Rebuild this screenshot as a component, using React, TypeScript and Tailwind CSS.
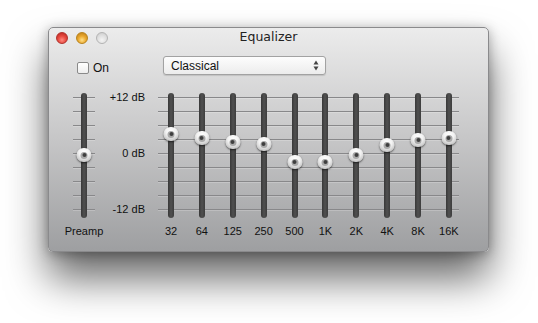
import React from "react";

const bands: { label: string; y: number }[] = [
  { label: "32", y: 41 },
  { label: "64", y: 45 },
  { label: "125", y: 49 },
  { label: "250", y: 51 },
  { label: "500", y: 69 },
  { label: "1K", y: 69 },
  { label: "2K", y: 62 },
  { label: "4K", y: 52 },
  { label: "8K", y: 47 },
  { label: "16K", y: 45 },
];

function Knob({ y }: { y: number }) {
  return (
    <div
      className="absolute left-1/2 -translate-x-1/2 w-[15px] h-[14px] rounded-full bg-[radial-gradient(circle_at_50%_30%,#ffffff_0%,#f2f2f2_40%,#c9c9c9_75%,#9a9a9a_100%)] shadow-[0_1px_2px_rgba(0,0,0,0.6)] flex items-center justify-center"
      style={{ top: y - 7 }}
    >
      <div className="w-[7px] h-[7px] rounded-full bg-[#a9a9a9] flex items-center justify-center">
        <div className="w-[4px] h-[4px] rounded-full bg-[#3f3f3f]" />
      </div>
    </div>
  );
}

function Track({ y }: { y: number }) {
  return (
    <div className="relative w-[16px] h-[125px] flex justify-center">
      <div className="w-[6px] h-[125px] rounded-full bg-gradient-to-r from-[#383838] via-[#505050] to-[#3d3d3d]" />
      <Knob y={y} />
    </div>
  );
}

const lines =
  "bg-[linear-gradient(to_bottom,#88888a_0px,#88888a_1px,rgba(255,255,255,0.2)_1px,rgba(255,255,255,0.2)_2px,transparent_2px)] bg-[length:100%_14px] bg-[position:0_4px]";

export default function App() {
  return (
    <div
      className="min-h-screen bg-white pt-[27px] pl-[48px]"
      style={{ fontFamily: '"Liberation Sans", Arial, sans-serif' }}
    >
      <div className="w-[441px] h-[225px] rounded-[5px] border border-[#8a8a8c] bg-gradient-to-b from-[#ececec] via-[#c6c6c7] to-[#9e9fa1] shadow-[0_26px_42px_rgba(0,0,0,0.6),0_2px_12px_rgba(0,0,0,0.3)] flex flex-col">
        {/* Title bar */}
        <div className="h-[19px] grid grid-cols-[1fr_auto_1fr] items-center px-[7px]">
          <div className="flex items-center gap-[8px]">
            <div className="w-[12px] h-[12px] rounded-full border border-[#b0302b] bg-[radial-gradient(circle_at_50%_70%,#ff8a80_0%,#e84a40_45%,#b3211b_100%)]" />
            <div className="w-[12px] h-[12px] rounded-full border border-[#b8831c] bg-[radial-gradient(circle_at_50%_70%,#ffe08a_0%,#eba92f_45%,#b97a14_100%)]" />
            <div className="w-[12px] h-[12px] rounded-full border border-[#b4b4b4] bg-[radial-gradient(circle_at_50%_70%,#f4f4f4_0%,#e0e0e0_50%,#c8c8c8_100%)]" />
          </div>
          <div
            className="text-[12.5px] text-[#222] leading-none"
            style={{ fontFamily: '"DejaVu Sans", "Liberation Sans", sans-serif' }}
          >
            Equalizer
          </div>
          <div />
        </div>

        {/* Controls row */}
        <div className="mt-[9px] h-[19px] flex items-start pl-[28px]">
          <div className="w-[86px] mt-[6px] flex items-center gap-[4px]">
            <div className="w-[12px] h-[12px] rounded-[2px] border border-[#8a8a8a] bg-gradient-to-b from-[#ffffff] to-[#eeeeee]" />
            <span className="text-[12px] leading-[12px] text-[#111]">On</span>
          </div>
          <div className="w-[163px] h-[19px] rounded-[3px] border border-[#a2a2a2] bg-gradient-to-b from-[#fdfdfd] to-[#ececec] shadow-[0_1px_1px_rgba(0,0,0,0.12)] flex items-center justify-between pl-[7px] pr-[6px]">
            <span className="text-[12px] text-[#111]">Classical</span>
            <svg width="6" height="11" viewBox="0 0 6 11">
              <path d="M3 0.5 L5.5 4.5 L0.5 4.5 Z" fill="#444" />
              <path d="M3 10.5 L5.5 6.5 L0.5 6.5 Z" fill="#444" />
            </svg>
          </div>
        </div>

        {/* Sliders */}
        <div className="mt-[18px] flex items-start pl-[15px]">
          {/* Preamp */}
          <div className="w-[40px] flex flex-col items-center">
            <div className={`w-[22px] h-[125px] flex justify-center ${lines}`}>
              <Track y={62} />
            </div>
            <div className="mt-[7px] text-[11px] leading-[12px] text-[#111] whitespace-nowrap">
              Preamp
            </div>
          </div>

          {/* dB labels */}
          <div className="w-[41px] h-[124px] -mt-[2px] flex flex-col justify-between items-end text-[11px] leading-[12px] text-[#111] whitespace-nowrap">
            <span>+12 dB</span>
            <span>0 dB</span>
            <span>-12 dB</span>
          </div>

          {/* Bands */}
          <div className="ml-[13px] w-[301px] flex flex-col">
            <div className={`h-[125px] flex justify-between pl-[5px] pr-[2px] ${lines}`}>
              {bands.map((b) => (
                <Track key={b.label} y={b.y} />
              ))}
            </div>
            <div className="mt-[7px] flex justify-between pl-[5px] pr-[2px]">
              {bands.map((b) => (
                <div
                  key={b.label}
                  className="w-[16px] flex justify-center text-[11px] leading-[12px] text-[#111] whitespace-nowrap"
                >
                  {b.label}
                </div>
              ))}
            </div>
          </div>
        </div>
      </div>
    </div>
  );
}
